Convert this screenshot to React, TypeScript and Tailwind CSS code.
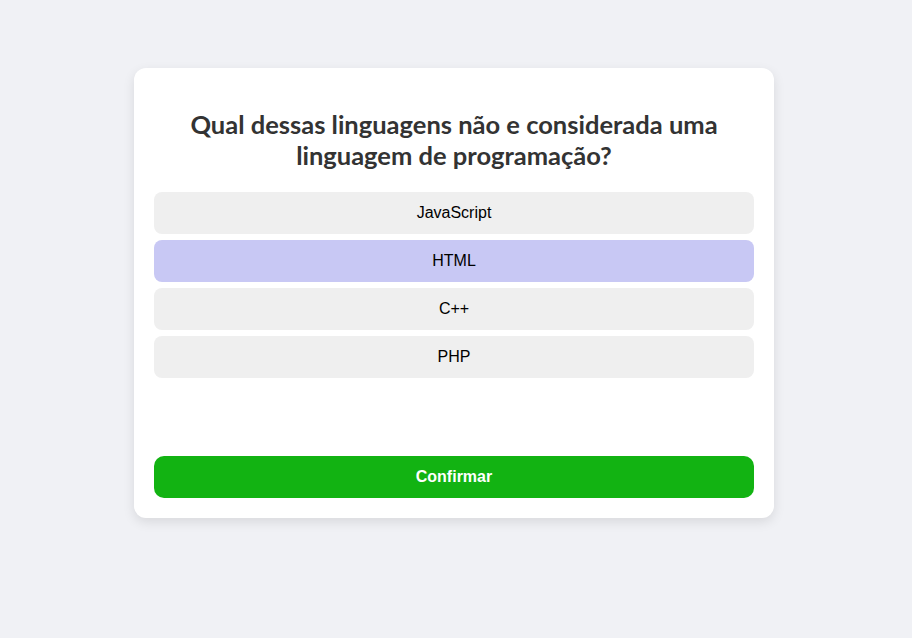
import { useState } from "react"

const opcoes = ["JavaScript", "HTML", "C++", "PHP"]

export default function App() {
  const [selecionada, setSelecionada] = useState(1)

  return (
    <div className="flex min-h-screen justify-center bg-[#f0f1f5] pt-[68px] pr-1">
      <div className="flex h-[450px] w-[640px] flex-col rounded-[12px] bg-white p-5 shadow-[0_4px_12px_rgba(0,0,0,0.1)]">
        <h2 className="mt-[21px] mb-[21px] text-center font-['Lato',sans-serif] text-[25.5px] leading-[31px] font-bold text-[#333]">
          Qual dessas linguagens não e considerada uma linguagem de programação?
        </h2>

        <div className="flex flex-col gap-[6px]">
          {opcoes.map((op, i) => (
            <button
              key={op}
              onClick={() => setSelecionada(i)}
              className={
                i === selecionada
                  ? "h-[42px] rounded-[8px] bg-[#c8c8f4] font-['Liberation_Sans',Arial,sans-serif] text-[16px] text-black"
                  : "h-[42px] rounded-[8px] bg-[#efefef] font-['Liberation_Sans',Arial,sans-serif] text-[16px] text-black"
              }
            >
              {op}
            </button>
          ))}
        </div>

        <button className="mt-auto h-[42px] rounded-[10px] bg-[#12b312] font-['Liberation_Sans',Arial,sans-serif] text-[16px] font-bold text-white">
          Confirmar
        </button>
      </div>
    </div>
  )
}
